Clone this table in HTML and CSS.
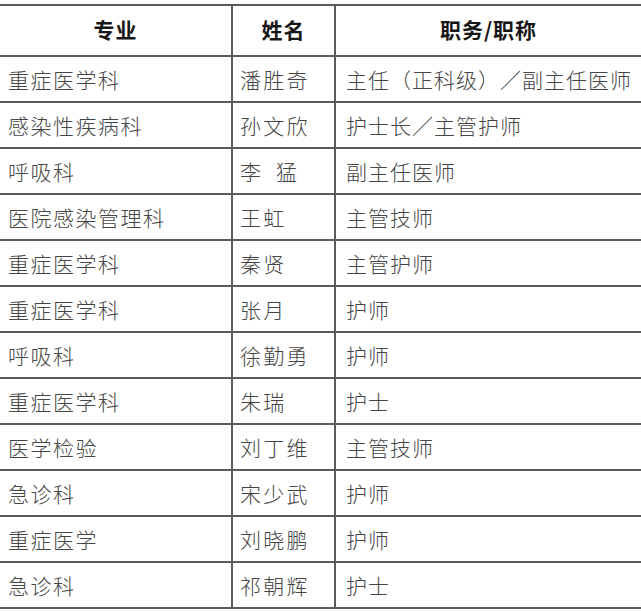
FILE: index.html
```html
<!DOCTYPE html>
<html lang="zh-CN">
<head>
<meta charset="utf-8">
<title>名单</title>
<link rel="stylesheet" href="styles.css">
</head>
<body>
<div class="sheet">
  <div class="cell head">专业</div>
  <div class="cell head">姓名</div>
  <div class="cell head">职务/职称</div>

  <div class="cell">重症医学科</div><div class="cell name">潘胜奇</div><div class="cell">主任（正科级）／副主任医师</div>
  <div class="cell">感染性疾病科</div><div class="cell name">孙文欣</div><div class="cell">护士长／主管护师</div>
  <div class="cell">呼吸科</div><div class="cell name">李&ensp;猛</div><div class="cell">副主任医师</div>
  <div class="cell">医院感染管理科</div><div class="cell name">王虹</div><div class="cell">主管技师</div>
  <div class="cell">重症医学科</div><div class="cell name">秦贤</div><div class="cell">主管护师</div>
  <div class="cell">重症医学科</div><div class="cell name">张月</div><div class="cell">护师</div>
  <div class="cell">呼吸科</div><div class="cell name">徐勤勇</div><div class="cell">护师</div>
  <div class="cell">重症医学科</div><div class="cell name">朱瑞</div><div class="cell">护士</div>
  <div class="cell">医学检验</div><div class="cell name">刘丁维</div><div class="cell">主管技师</div>
  <div class="cell">急诊科</div><div class="cell name">宋少武</div><div class="cell">护师</div>
  <div class="cell">重症医学</div><div class="cell name">刘晓鹏</div><div class="cell">护师</div>
  <div class="cell">急诊科</div><div class="cell name">祁朝辉</div><div class="cell">护士</div>
</div>
</body>
</html>
```
FILE: styles.css
```css
html, body {
  margin: 0;
  padding: 0;
  background: #ffffff;
}
body {
  padding-top: 4px;
  font-family: "Noto Sans CJK SC", "Noto Sans", sans-serif;
  overflow: hidden;
}
.sheet {
  display: grid;
  grid-template-columns: 231px 103px 1fr;
  grid-auto-rows: 46px;
  grid-template-rows: 51px;
  border-top: 2px solid #5c5c5c;
  color: #454545;
}
.cell {
  box-sizing: border-box;
  border-bottom: 2px solid #5c5c5c;
  display: flex;
  align-items: center;
  padding-left: 8px;
  font-size: 21px;
  font-weight: 300;
  letter-spacing: 1.5px;
  white-space: nowrap;
  overflow: hidden;
}
.cell:nth-child(3n+2),
.cell:nth-child(3n) {
  border-left: 2px solid #5c5c5c;
}
.cell:nth-child(3n) {
  padding-left: 10px;
  letter-spacing: 1px;
}
.cell.name {
  padding-left: 7px;
  letter-spacing: 2.3px;
}
.cell.head {
  justify-content: center;
  padding-left: 0;
  padding-bottom: 4px;
  font-size: 21px;
  font-weight: 700;
  letter-spacing: 1px;
  color: #161616;
}
```
